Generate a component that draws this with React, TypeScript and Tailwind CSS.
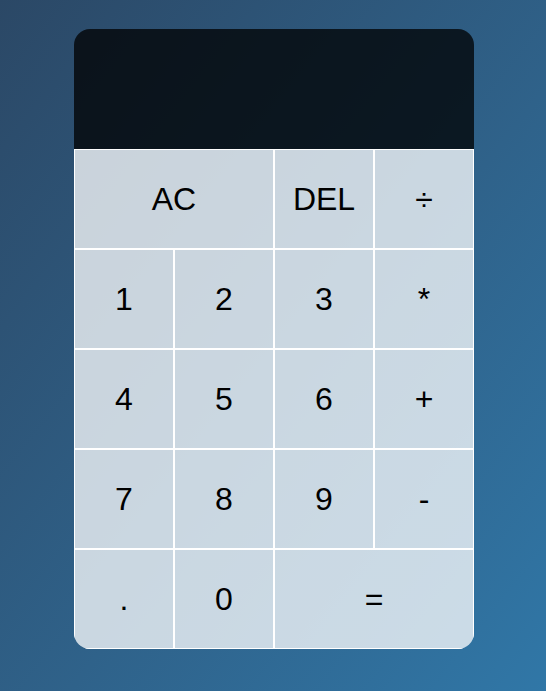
import React, { useState } from 'react';

type Key = {
  label: string;
  wide?: boolean;
};

const KEYS: Key[] = [
  { label: 'AC', wide: true },
  { label: 'DEL' },
  { label: '÷' },
  { label: '1' },
  { label: '2' },
  { label: '3' },
  { label: '*' },
  { label: '4' },
  { label: '5' },
  { label: '6' },
  { label: '+' },
  { label: '7' },
  { label: '8' },
  { label: '9' },
  { label: '-' },
  { label: '.' },
  { label: '0' },
  { label: '=', wide: true },
];

export default function App() {
  const [current, setCurrent] = useState('');

  const press = (label: string) => {
    if (label === 'AC') return setCurrent('');
    if (label === 'DEL') return setCurrent((v) => v.slice(0, -1));
    if (label === '=') return;
    setCurrent((v) => v + label);
  };

  return (
    <div className="min-h-screen w-full bg-linear-to-br from-[#2b4866] to-[#3077a7] flex justify-center pl-[2px] pt-[29px] font-['Liberation_Sans',Arial,sans-serif]">
      <div className="grid grid-cols-[repeat(4,100px)] grid-rows-[120px_repeat(5,100px)] h-fit rounded-2xl overflow-hidden">
        {/* output screen */}
        <div className="col-span-4 bg-black/75 flex flex-col items-end justify-around px-3 text-white break-all">
          <div className="text-[40px]">{current}</div>
        </div>

        {KEYS.map((k) => (
          <button
            key={k.label}
            onClick={() => press(k.label)}
            className={`${k.wide ? 'col-span-2' : ''} bg-white/75 border border-white text-[32px] text-black outline-none cursor-pointer flex items-center justify-center`}
          >
            {k.label}
          </button>
        ))}
      </div>
    </div>
  );
}
